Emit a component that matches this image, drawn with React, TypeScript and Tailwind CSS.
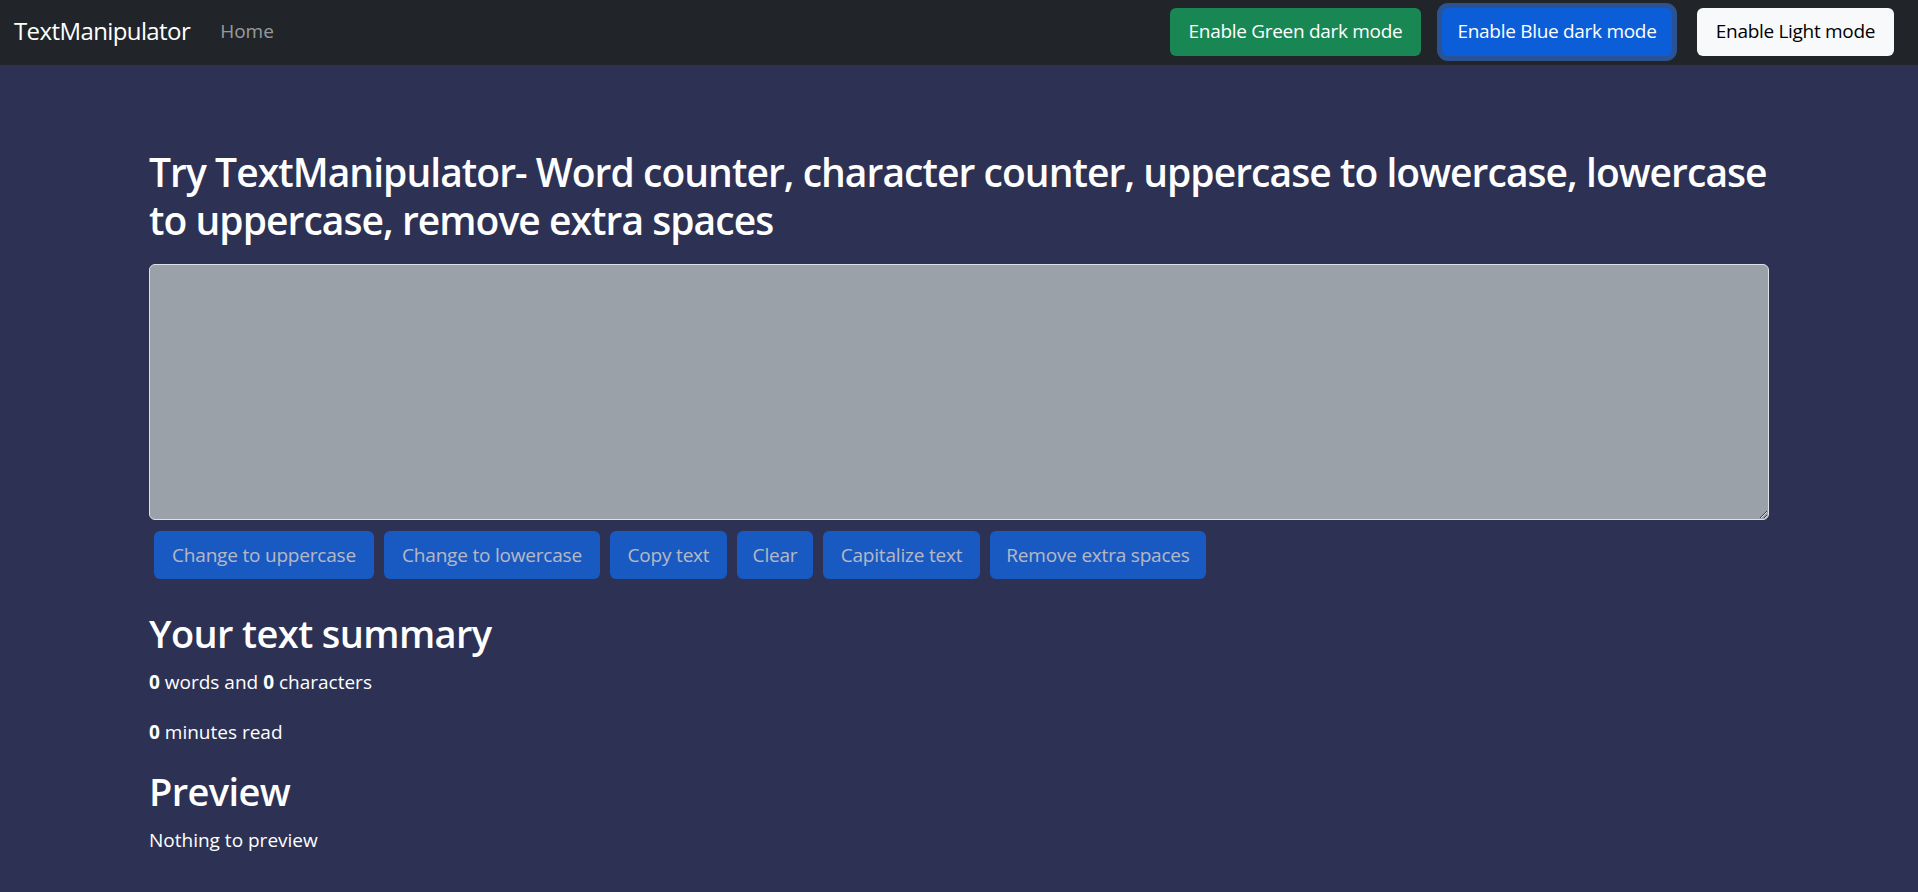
import React from "react";

const font = { fontFamily: '"Open Sans", "Noto Sans", sans-serif' };

export default function App() {
  const actions: { label: string; w: string }[] = [
    { label: "Change to uppercase", w: "w-[220px]" },
    { label: "Change to lowercase", w: "w-[216px]" },
    { label: "Copy text", w: "w-[117px]" },
    { label: "Clear", w: "w-[76px]" },
    { label: "Capitalize text", w: "w-[157px]" },
    { label: "Remove extra spaces", w: "w-[216px]" },
  ];
  return (
    <div className="min-h-[892px] bg-[#2d3255] text-white" style={font}>
      <nav className="h-[65px] bg-[#212529] flex items-center pl-[14px] pr-[24px]">
        <span className="text-[24px] leading-[30px] text-white tracking-[-0.6px] -mt-[3px]">TextManipulator</span>
        <span className="ml-[30px] text-[19px] text-[#ffffff8c] -mt-[3px]">Home</span>
        <div className="ml-auto flex items-center -mt-[1px]">
          <button className="w-[251px] h-[48px] rounded-[6px] bg-[#198754] text-white text-[19px] tracking-[-0.3px] pb-[2px]">
            Enable Green dark mode
          </button>
          <button className="ml-[21px] w-[230px] h-[48px] rounded-[6px] bg-[#0b5ed7] text-white text-[19px] tracking-[-0.3px] shadow-[0_0_0_5px_#2b5393] pb-[2px]">
            Enable Blue dark mode
          </button>
          <button className="ml-[25px] w-[197px] h-[48px] rounded-[6px] bg-[#f8f9fa] text-black text-[19px] tracking-[-0.3px] pb-[2px]">
            Enable Light mode
          </button>
        </div>
      </nav>
      <main className="w-[1620px] ml-[149px] pt-[83px]">
        <h1 className="text-[39px] leading-[48px] font-semibold tracking-[-0.95px] mb-[20px]">
          <div className="whitespace-nowrap">Try TextManipulator- Word counter, character counter, uppercase to lowercase, lowercase</div>
          <div className="whitespace-nowrap">to uppercase, remove extra spaces</div>
        </h1>
        <textarea className="block w-full h-[256px] bg-[#9aa1a9] border border-[#dee2e6] rounded-[6px] outline-none resize-y" />
        <div className="flex gap-[10px] mt-[11px] ml-[5px]">
          {actions.map((a) => (
            <button
              key={a.label}
              className={`${a.w} h-[48px] rounded-[6px] bg-[#0d6efd] text-white opacity-[.65] text-[19px] tracking-[-0.2px] whitespace-nowrap`}
            >
              {a.label}
            </button>
          ))}
        </div>
        <h2 className="mt-[30px] text-[38px] leading-[48px] font-semibold tracking-[-0.6px] mb-[10px]">Your text summary</h2>
        <p className="text-[19px] leading-[30px] mb-[20px]">
          <b>0</b> words and <b>0</b> characters
        </p>
        <p className="text-[19px] leading-[30px] mb-[20px]">
          <b>0</b> minutes read
        </p>
        <h2 className="text-[38px] leading-[48px] font-semibold tracking-[-0.6px] mb-[10px]">Preview</h2>
        <p className="text-[19px] leading-[30px]">Nothing to preview</p>
      </main>
    </div>
  );
}
